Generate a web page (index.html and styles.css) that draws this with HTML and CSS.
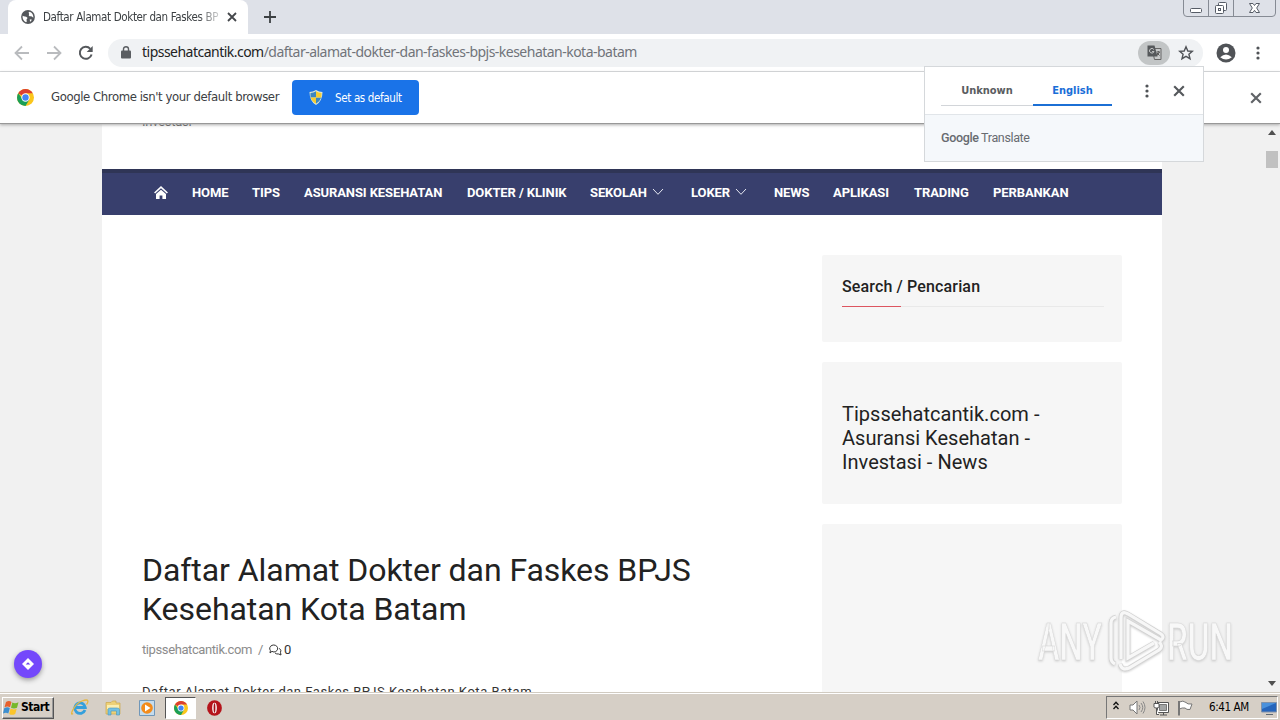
FILE: index.html
```html
<!DOCTYPE html>
<html lang="id">
<head>
<meta charset="utf-8">
<title>Daftar Alamat Dokter dan Faskes BPJS Kesehatan Kota Batam</title>
<link rel="stylesheet" href="styles.css">
</head>
<body>
<svg class="defs" width="0" height="0">
  <symbol id="chrome" viewBox="0 0 16 16">
    <circle cx="8" cy="8" r="8" fill="#fbc61c"/>
    <path d="M8 8 1.100 4A8 8 0 0 1 14.900 4H8Z" fill="#dc3f31"/>
    <path d="M1.100 4A8 8 0 0 0 8 16L11.500 10 5 9Z" fill="#1a9f57"/>
    <circle cx="8" cy="8" r="3.900" fill="#fff"/><circle cx="8" cy="8" r="3" fill="#4285f4"/>
  </symbol>
  <symbol id="close" viewBox="0 0 10 10"><path d="M1 1 9 9M9 1 1 9" stroke="currentColor" stroke-width="1.800" fill="none"/></symbol>
  <symbol id="dots" viewBox="0 0 4 14"><g fill="#505357"><circle cx="2" cy="2" r="1.600"/><circle cx="2" cy="7" r="1.600"/><circle cx="2" cy="12" r="1.600"/></g></symbol>
  <symbol id="chevron" viewBox="0 0 12 8"><path d="M1 1 6 6.300 11 1" stroke="#e6e8f2" fill="none"/></symbol>
</svg>

<header class="tabstrip">
  <div class="tab">
    <svg width="14" height="14" viewBox="0 0 14 14"><circle cx="7" cy="7" r="6.900" fill="#55585c"/><path d="M1.600 5.800C3 6.800 5 6.200 6.200 7.400 7.200 8.500 5 9 5.600 10.200 6 11.400 5.600 12 5 12.200 2.800 11.400 1.200 9 1.600 5.800ZM8 1.800C7 3 8.600 3.400 8 4.400 7.200 5.600 8.600 6.600 9.800 6.300 11 6 11.400 7.600 12.400 7.400 12.400 4.400 10.400 2 8 1.800ZM8.800 9.200 11 9.800 9 12Z" fill="#fff"/></svg>
    <span class="tab-title">Daftar Alamat Dokter dan Faskes BP</span>
    <svg class="tab-close" width="10" height="10"><use href="#close"/></svg>
  </div>
  <svg class="newtab" width="12" height="12" viewBox="0 0 12 12"><path d="M6 0V12M0 6H12" stroke="#3c4043" stroke-width="1.800"/></svg>
  <svg class="winbtns" width="94" height="17" viewBox="0 0 94 17">
    <path d="M.5 0V13Q.5 16.500 4 16.500H89Q92.500 16.500 92.500 13V0M25.500 0V16.500M50.500 0V16.500" fill="none" stroke="#868b94"/>
    <g fill="#fff" stroke="#565c66"><rect x="7.500" y="8.500" width="11" height="4" rx="1"/><rect x="35.500" y="2.500" width="8" height="8" rx="1"/><rect x="32.500" y="5.500" width="8" height="8" rx="1"/><rect x="35.500" y="8.500" width="2" height="2"/><path d="M66.500 3.500H70L71.500 5.500 73 3.500H76.500L73.700 8 76.500 12.500H73L71.500 10.300 70 12.500H66.500L69.300 8Z"/></g>
  </svg>
</header>

<div class="toolbar">
  <svg class="back" width="16" height="16" viewBox="0 0 16 16"><path d="M15 8H2M8 1.500 1.500 8 8 14.500" fill="none" stroke="#b9bbbe" stroke-width="1.800"/></svg>
  <svg class="forward" width="16" height="16" viewBox="0 0 16 16"><path d="M1 8H14M8 1.500 14.500 8 8 14.500" fill="none" stroke="#b9bbbe" stroke-width="1.800"/></svg>
  <svg class="reload" width="16" height="16" viewBox="0 0 16 16"><path d="M13.600 9.500A6 6 0 1 1 12.300 3.800" fill="none" stroke="#55585c" stroke-width="2"/><path d="M14.700 1V7H8.700Z" fill="#55585c"/></svg>
  <div class="omnibox">
    <svg width="10" height="13" viewBox="0 0 10 13"><rect y="4.500" width="10" height="8" rx="1" fill="#5a5d61"/><path d="M2.500 5V3a2.500 2.300 0 0 1 5 0V5" fill="none" stroke="#5a5d61" stroke-width="1.400"/></svg>
    <span class="url"><b>tipssehatcantik.com</b>/daftar-alamat-dokter-dan-faskes-bpjs-kesehatan-kota-batam</span>
    <span class="pill"><svg width="15" height="15" viewBox="0 0 15 15"><path d="M5 3.500H14V14.500H7.500Z" fill="#c6c8c9" stroke="#666"/><path d="M.5 .5H7.500L10.500 11.500H.5Z" fill="#55585b"/><path d="M6.800 4.500A2.300 2.300 0 1 0 7 6.600H5" fill="none" stroke="#c6c8c9"/><path d="M9.500 7H13M11.300 6V7M12.500 7 9.500 11M10 8 12.500 10.500" fill="none" stroke="#555"/></svg></span>
    <svg width="16" height="16" viewBox="0 0 16 16"><path d="M8 1.800 9.800 6 14.300 6.300 10.900 9.200 12 13.700 8 11.300 4 13.700 5.100 9.200 1.700 6.300 6.200 6Z" fill="none" stroke="#505357" stroke-width="1.400"/></svg>
  </div>
  <svg class="avatar" width="20" height="20" viewBox="0 0 20 20"><circle cx="10" cy="10" r="9.500" fill="#505357"/><circle cx="10" cy="7" r="3" fill="#fff"/><path d="M4.200 14.200Q10 9 15.800 14.200 10 19 4.200 14.200Z" fill="#fff"/></svg>
  <svg class="menu" width="4" height="14"><use href="#dots"/></svg>
</div>

<div class="infobar">
  <svg class="info-logo" width="17" height="17"><use href="#chrome"/></svg>
  <span class="info-text">Google Chrome isn't your default browser</span>
  <div class="set-default">
    <svg width="14" height="15" viewBox="0 0 14 15"><path d="M7 0Q10 2 13.500 2 13.500 11 7 15 .5 11 .5 2 4 2 7 0Z" fill="#dfe9d8"/><path d="M7 1.300V7.500H1.600Q1.300 5 1.500 3 4.500 3 7 1.300ZM7 7.500H12.200Q11 11.500 7 13.700Z" fill="#3c87c0"/><path d="M7 1.300Q9.500 3 12.500 3 12.600 5.500 12.200 7.500H7ZM7 7.500V13.700Q2.800 11.500 1.600 7.500Z" fill="#f6cd31"/></svg>
    <span>Set as default</span>
  </div>
  <svg class="info-close" width="12" height="12"><use href="#close"/></svg>
</div>

<main class="viewport">
  <div class="site">
    <div class="tagline">Investasi</div>
    <nav class="nav">
      <svg width="14" height="13" viewBox="0 0 14 13"><path d="M.6 7 7 1.200 13.400 7" fill="none" stroke="#fff" stroke-width="1.600"/><path d="M2 8 7 3.700 12 8V13H8.400V9.500H5.600V13H2Z" fill="#fff"/></svg>
      <span>HOME</span><span>TIPS</span><span>ASURANSI KESEHATAN</span><span>DOKTER / KLINIK</span>
      <span>SEKOLAH <svg width="12" height="8"><use href="#chevron"/></svg></span>
      <span>LOKER <svg width="12" height="8"><use href="#chevron"/></svg></span>
      <span>NEWS</span><span>APLIKASI</span><span>TRADING</span><span>PERBANKAN</span>
    </nav>
    <div class="columns">
      <article class="post">
        <h1>Daftar Alamat Dokter dan Faskes BPJS Kesehatan Kota Batam</h1>
        <div class="meta"><span class="author">tipssehatcantik.com</span><span class="slash">/</span>
          <svg width="13" height="12" viewBox="0 0 13 12"><path d="M3 7.300 1 9 1.400 6.500A4 3.500 0 1 1 5 8Q4 8 3 7.300ZM10.300 4.300A3.500 3.500 0 0 1 11.500 8.700L12 11 9.700 10Q7.500 10.300 6 9" fill="none" stroke="#333"/></svg>
          <span>0</span></div>
        <p>Daftar Alamat Dokter dan Faskes BPJS Kesehatan Kota Batam</p>
      </article>
      <aside class="sidebar">
        <section class="card search"><h3>Search / Pencarian</h3></section>
        <section class="card about"><h2>Tipssehatcantik.com - Asuransi Kesehatan - Investasi - News</h2></section>
        <section class="card blank"></section>
      </aside>
    </div>
  </div>
  <div class="scrollbar">
    <svg width="8" height="5"><path d="M0 5 4 0 8 5Z" fill="#505050"/></svg>
    <i class="thumb"></i>
    <svg class="down" width="8" height="5"><path d="M0 0 4 5 8 0Z" fill="#505050"/></svg>
  </div>
</main>

<footer class="taskbar">
  <div class="start">
    <svg width="17" height="16" viewBox="0 0 17 16"><path d="M3 2Q6 0 8.500 2L7 7.300Q4.500 5.500 1.500 7.300Z" fill="#e8602c"/><path d="M9.300 2.500Q12 4 15.500 2.300L14 7.700Q11 9.300 8 7.700Z" fill="#76b82a"/><path d="M1.200 8.300Q4.500 6.500 6.800 8.200L5.300 13.500Q3 12 0 13.500Z" fill="#3d8fd0"/><path d="M7.600 8.600Q10.500 10.200 13.700 8.700L12.200 14Q9 15.700 6.200 14Z" fill="#fbc52b"/></svg>
    <span>Start</span>
  </div>
  <svg class="ie" width="18" height="17" viewBox="0 0 18 17"><path d="M14 11A5.300 5.300 0 1 1 14.300 8.500H5" fill="none" stroke="#35a0dc" stroke-width="2.800"/><path d="M2 14.500C-2 18 3 5 11 2 19-1 17 3.500 15.500 5.500" fill="none" stroke="#e5b742" stroke-width="1.300"/></svg>
  <svg class="explorer" width="17" height="16" viewBox="0 0 17 16"><path d="M1 2.500H6L7.500 1H11V3H15V14H1Z" fill="#eed177" stroke="#cba84b" stroke-width=".7"/><path d="M2 5H14V9H2Z" fill="#fbeeb0"/><path d="M3 15V9.500Q3 8 5 8H12Q14.500 8 14.500 9.500V15H11.500V11H6V15Z" fill="#72c0e3" stroke="#4b95b9" stroke-width=".6"/></svg>
  <svg class="media" width="16" height="16" viewBox="0 0 16 16"><path d="M.5 .5H15.500V15.500H.5Z" fill="#c5dced" stroke="#7097b9"/><circle cx="8" cy="8" r="5.800" fill="#f38b1b"/><path d="M6 4.500 11.500 8 6 11.500Z" fill="#fff"/></svg>
  <div class="task-active"><svg width="14" height="14"><use href="#chrome"/></svg></div>
  <svg class="opera" width="15" height="16" viewBox="0 0 15 16"><ellipse cx="7.500" cy="8" rx="7.400" ry="7.800" fill="#b5141b"/><ellipse cx="7.500" cy="8" rx="2.300" ry="5.300" fill="#fff"/><ellipse cx="7.500" cy="8" rx=".9" ry="4.700" fill="#a10f17"/></svg>
  <div class="tray">
    <svg class="expand" width="6" height="9" viewBox="0 0 6 9"><path d="M.5 4 3 1.200 5.500 4M.5 8 3 5.200 5.500 8" fill="none" stroke="#111" stroke-width="1.300"/></svg>
    <svg width="17" height="15" viewBox="0 0 17 15"><path d="M1 5H4L8 1V14L4 10H1Z" fill="#fff" stroke="#777"/><path d="M10 5Q12 7.500 10 10M12 3Q15.500 7.500 12 12M14 1.500Q18 7.500 14 13.500" fill="none" stroke="#888"/></svg>
    <svg width="17" height="16" viewBox="0 0 17 16"><path d="M4.500 2.500H15.500V12.500H4.500Z" fill="#fff" stroke="#555"/><path d="M6.500 4.500H13.500V10.500H6.500Z" fill="#a3a5a5" stroke="#777"/><path d="M7 15H14M10.500 12.500V15" stroke="#555"/><path d="M1 3.500H6V7Q6 8 3.500 8 1 8 1 7ZM2.500 1V3.500M4.500 1V3.500M3.500 8V14.500H6" fill="#fff" stroke="#555"/></svg>
    <svg width="17" height="16" viewBox="0 0 17 16"><path d="M2.500 2Q6 0 9 2.500 10 4.500 15 4L13 9.500Q9.500 10 8 8 5 7.500 2.500 9Z" fill="#fff" stroke="#777"/><path d="M2 1V15.500" stroke="#777" stroke-width="2"/></svg>
    <span class="clock">6:41 AM</span>
    <svg width="16" height="14" viewBox="0 0 16 14"><path d="M.5 1.500H15.500V11H.5Z" fill="#2665bb" stroke="#8092aa"/><path d="M1 2H15L1 8Z" fill="#4a91dc"/><path d="M5 13.500H12" stroke="#5d6873"/></svg>
  </div>
</footer>

<div class="translate">
  <div class="translate-top">
    <span class="lang">Unknown</span><span class="lang active">English</span>
    <svg class="t-dots" width="4" height="14"><use href="#dots"/></svg>
    <svg class="t-close" width="12" height="12"><use href="#close"/></svg>
  </div>
  <div class="translate-foot"><b>Google</b> Translate</div>
</div>

<div class="fab"><svg width="12" height="12" viewBox="0 0 12 12"><path d="M6 0 12 6 6 12 0 6Z" fill="#fff"/><path d="M3.700 6.500 6 4.200 8.300 6.500Z" fill="#6a3df0"/></svg></div>

<svg class="watermark" width="210" height="72" viewBox="0 0 210 72">
  <g class="mark-text"><text x="8" y="54" textLength="64" lengthAdjust="spacingAndGlyphs">ANY</text><text x="137" y="54" textLength="66" lengthAdjust="spacingAndGlyphs">RUN</text></g>
  <path d="M86 11Q81 12 81 17V52Q81 56 85 58M91 53V12Q91 4 98 8L131 28Q135 31 131 34L98 15V52L124 37M90 58Q92 65 99 62L129 44Q134 40 129 36" fill="none" stroke="#d2d2d2" stroke-width="4.600"/>
  <path d="M86 11Q81 12 81 17V52Q81 56 85 58M91 53V12Q91 4 98 8L131 28Q135 31 131 34L98 15V52L124 37M90 58Q92 65 99 62L129 44Q134 40 129 36" fill="none" stroke="#f7f7f7" stroke-width="3.200"/>
</svg>
</body>
</html>
```
FILE: styles.css
```css
* { box-sizing: border-box; }
body { margin: 0; width: 1280px; height: 720px; overflow: hidden; display: flex; flex-direction: column; position: relative; background: #fff; font-family: "DejaVu Sans Condensed", "DejaVu Sans", sans-serif; font-stretch: condensed; color: #222; }
svg { display: block; flex: none; }
span { white-space: nowrap; }
.defs { position: absolute; }

.tabstrip { height: 34px; flex: none; background: #dee1e8; display: flex; padding-left: 8px; }
.tab { width: 240px; height: 34px; background: #fff; border-radius: 8px 8px 0 0; display: flex; align-items: center; padding-left: 13px; }
.tab-title { width: 176px; margin-left: 8px; font: 11.500px/18px "DejaVu Sans Condensed", sans-serif; letter-spacing: -.36px; color: #3c4043; mask-image: linear-gradient(90deg, #000 155px, transparent 182px); }
.tab-close { margin-left: 8px; color: #44474b; }
.newtab { margin: 11px 0 0 16px; }
.winbtns { margin-left: auto; margin-right: 3px; }

.toolbar { height: 38px; flex: none; display: flex; align-items: center; border-bottom: 1px solid #d8dadd; }
.back { margin-left: 14px; }
.forward { margin-left: 16px; }
.reload { margin-left: 16px; }
.omnibox { width: 1095px; height: 28px; margin-left: 14px; border-radius: 14px; background: #f0f2f4; display: flex; align-items: center; padding-left: 13px; }
.url { width: 996px; margin-left: 11px; margin-top: -2px; font: 14px/20px "Noto Sans", sans-serif; letter-spacing: -.52px; color: #70747a; }
.url b { font-weight: 400; color: #222; }
.pill { width: 32px; height: 24px; border-radius: 12px; background: #c2c5c6; display: grid; place-items: center; margin-right: 8px; }
.avatar { margin-left: 13px; }
.menu { margin-left: 20px; }

.infobar { height: 52px; flex: none; display: flex; align-items: center; border-bottom: 1px solid #989898; box-shadow: 0 1px 3px #aaa; z-index: 1; background: #fff; padding-left: 17px; }
.info-text { width: 241px; margin-left: 17px; margin-top: -1px; font: 13px/20px "DejaVu Sans Condensed", sans-serif; letter-spacing: -.41px; color: #3c4043; }
.set-default { width: 127px; height: 35px; background: #1a73e8; border-radius: 4px; color: #fff; display: flex; align-items: center; padding-left: 17px; gap: 12px; font-size: 11.500px; letter-spacing: -.35px; }
.info-close { margin-left: auto; margin-right: 18px; color: #606367; }

.viewport { height: 568px; flex: none; background: #f1f1f1; overflow: hidden; display: flex; padding-left: 102px; }
.site { width: 1060px; height: 568px; background: #fff; overflow: hidden; font-family: Roboto, sans-serif; font-stretch: normal; }
.tagline { height: 55px; margin-top: -10px; padding-left: 40px; font-size: 13px; line-height: 15px; letter-spacing: -.25px; color: #444; }
.nav { height: 46px; background: #383f6d; border-top: 4px solid #2f3556; display: grid; grid-template-columns: 38px 60px 52px 163px 123px 101px 83px 59px 81px 79px auto; align-items: center; padding: 0 0 4px 52px; color: #fff; font-size: 13px; font-weight: 700; letter-spacing: -.1px; }
.nav span { display: flex; align-items: center; gap: 5px; }
.columns { display: flex; padding: 40px 40px 0; gap: 20px; }
.post { width: 660px; padding-top: 296px; }
.post h1 { margin: 0; width: 600px; font-size: 32px; line-height: 39px; font-weight: 400; letter-spacing: -.06px; color: #222; }
.meta { display: flex; align-items: center; margin-top: 12px; font-size: 13px; line-height: 17px; color: #333; }
.author { width: 110px; color: #8c8c8c; letter-spacing: -.4px; }
.slash { width: 17px; padding-left: 6px; color: #888; }
.meta svg { margin-right: 2px; }
.post p { margin: 24px 0 0; font-size: 13px; line-height: 20px; letter-spacing: .54px; color: #333; white-space: nowrap; }
.sidebar { width: 300px; display: flex; flex-direction: column; gap: 20px; }
.card { background: #f6f6f6; padding: 20px; flex: none; border-radius: 2px; }
.search { height: 87px; padding-right: 18px; }
.card h3 { margin: 0; height: 32px; font-size: 16px; line-height: 23px; font-weight: 500; letter-spacing: .14px; border-bottom: 1px solid #e8e8e8; border-image: linear-gradient(90deg, #dd5560 60px, #e9e9e9 60px) 1; }
.about { height: 142px; padding-top: 40px; }
.card h2 { margin: 0; width: 220px; font-size: 20px; line-height: 24px; font-weight: 400; letter-spacing: .03px; color: #222; }
.blank { height: 200px; }
.scrollbar { width: 16px; margin-left: auto; display: flex; flex-direction: column; align-items: center; padding: 6px 0; background: #f1f1f1; }
.thumb { width: 12px; height: 17px; margin-top: 16px; background: #c1c1c1; }
.down { margin-top: auto; }

.taskbar { height: 28px; flex: none; display: flex; align-items: center; background: #d6cfc6; border-top: 1px solid #d1cbc1; box-shadow: inset 0 1px #fff; padding: 2px 2px 0; z-index: 1; }
.start { width: 52px; height: 22px; border: 1px solid; border-color: #fff #555 #555 #fff; box-shadow: inset -1px -1px #999; display: flex; align-items: center; gap: 1px; font-size: 12px; font-weight: 700; letter-spacing: -.5px; color: #000; }
.start span { margin-top: -2px; }
.ie { margin-left: 17px; }
.explorer { margin-left: 16px; }
.media { margin-left: 17px; }
.task-active { width: 31px; height: 22px; margin-left: 10px; background: #fff; border: 1px solid; border-color: #555 #fff #fff #555; display: grid; place-items: center; }
.opera { margin-left: 11px; }
.tray { width: 172px; height: 23px; margin-left: auto; border: 1px solid; border-color: #777 #fff #fff #777; display: flex; align-items: center; gap: 7px; padding-left: 6px; color: #000; }
.expand { margin: -4px 3px 0 0; }
.clock { width: 42px; margin: -2px 3px 0 8px; font-size: 11.500px; letter-spacing: -.4px; }

.translate { position: absolute; left: 924px; top: 66px; width: 280px; height: 96px; background: #fff; border: 1px solid #d5d8db; z-index: 3; }
.translate-top { height: 48px; border-bottom: 1px solid #e1e5e9; display: flex; align-items: center; padding-left: 16px; }
.lang { width: 92px; height: 31px; line-height: 31px; border-bottom: 1px solid #d2d5d9; text-align: center; font-size: 11px; font-weight: 700; letter-spacing: -.03px; color: #5a5d61; }
.lang.active { width: 79px; color: #1a6ed8; border-bottom: 2px solid #1b6fd5; }
.t-dots { margin-left: 33px; }
.t-close { margin-left: 24px; color: #55585c; }
.translate-foot { height: 46px; background: #f5f8fb; padding: 0 16px; font: 12.500px/46px Roboto, sans-serif; letter-spacing: -.35px; color: #676b70; }
.translate-foot b { font-weight: 500; }

.fab { position: absolute; left: 14px; top: 650px; width: 28px; height: 28px; border-radius: 50%; background: #7448fb; display: grid; place-items: center; box-shadow: 0 2px 5px #999; z-index: 2; }
.watermark { position: absolute; left: 1030px; top: 606px; z-index: 2; filter: drop-shadow(0 1px 1px #ccc); }
.mark-text { font: 500 51px Roboto, sans-serif; fill: #f8f8f8; stroke: #d6d6d6; stroke-width: .6px; }
```
